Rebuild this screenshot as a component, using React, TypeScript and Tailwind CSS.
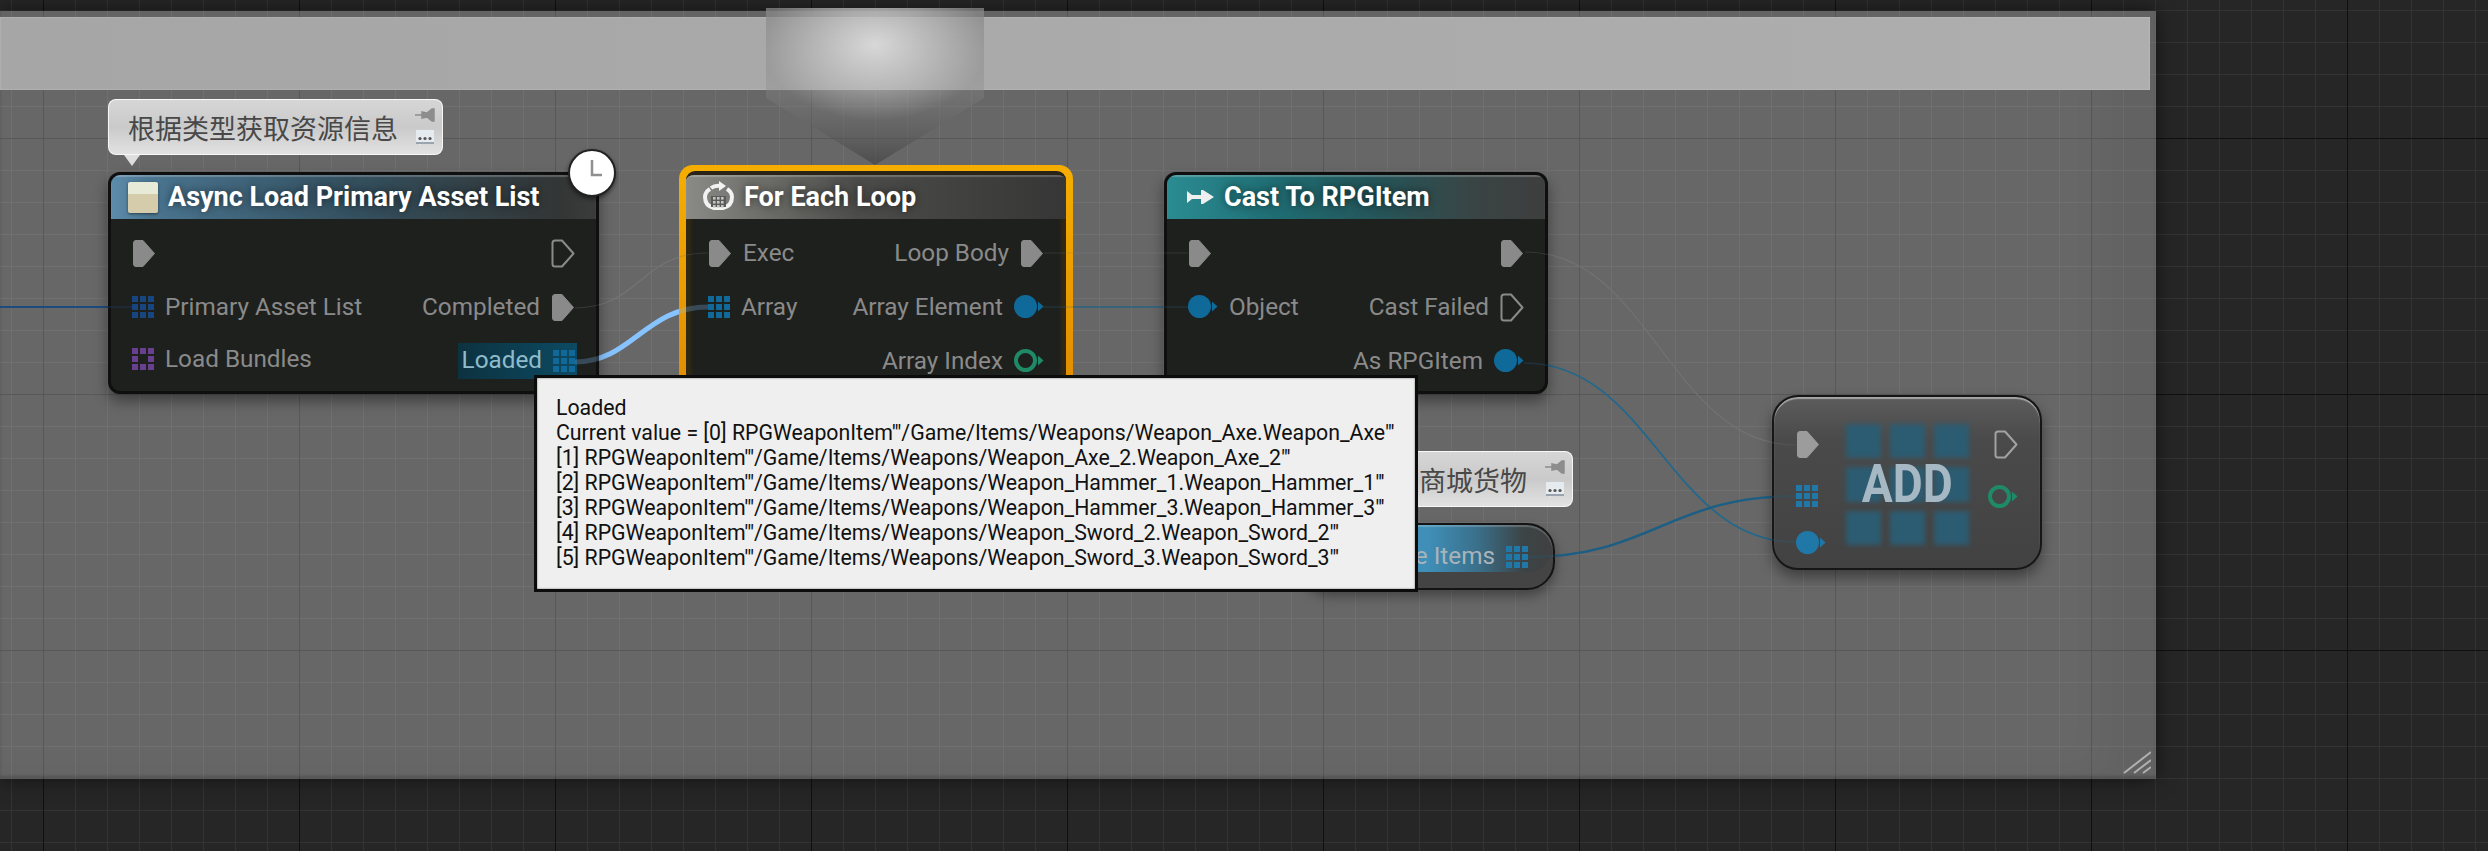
import React from "react";

const ExecPin = ({ filled = true, color = "#8a8a8a" }: { filled?: boolean; color?: string }) => (
  <svg width="24" height="29" viewBox="0 0 24 29" className="shrink-0">
    <path
      d="M1.5 4 Q1.5 1.5 4 1.5 H11 L22.5 14.5 L11 27.5 H4 Q1.5 27.5 1.5 25 Z"
      fill={filled ? color : "none"}
      stroke={color}
      strokeWidth={filled ? 1 : 2}
      strokeLinejoin="round"
    />
  </svg>
);

const ArrayPin = ({ color = "#11699a", hollow = false }: { color?: string; hollow?: boolean }) => (
  <svg width="22" height="22" viewBox="0 0 22 22" className="shrink-0">
    {[0, 8, 16].flatMap((y) =>
      [0, 8, 16].map((x) =>
        hollow && x === 8 && y === 8 ? null : <rect key={`${x}-${y}`} x={x} y={y} width="6" height="6" fill={color} />
      )
    )}
  </svg>
);

const ObjectPin = ({ color = "#0f6a9a" }: { color?: string }) => (
  <svg width="30" height="23" viewBox="0 0 30 23" className="shrink-0">
    <circle cx="11.5" cy="11.5" r="11.5" fill={color} />
    <path d="M24 6.5 L29.5 11.5 L24 16.5 Z" fill={color} />
  </svg>
);

const RingPin = () => (
  <svg width="30" height="23" viewBox="0 0 30 23" className="shrink-0">
    <circle cx="11.5" cy="11.5" r="9.5" fill="none" stroke="#1f8a68" strokeWidth="4" />
    <path d="M24 6.5 L29.5 11.5 L24 16.5 Z" fill="#1f8a68" />
  </svg>
);

const PinLabel = ({ children }: { children: React.ReactNode }) => (
  <span className="text-[24.3px] leading-none text-[#8a8a8a] font-['Roboto',sans-serif] whitespace-nowrap">{children}</span>
);

const Row = ({ children }: { children: React.ReactNode }) => (
  <div className="flex h-[54px] items-center justify-between">{children}</div>
);

const Side = ({ children, className = "" }: { children: React.ReactNode; className?: string }) => (
  <div className={`flex items-center gap-[11px] ${className}`}>{children}</div>
);

const BubbleIcons = () => (
  <div className="flex w-[22px] flex-col items-center gap-[7px]">
    <svg width="20" height="14" viewBox="0 0 20 14">
      <path d="M0 7 H7 M7 4 L12 5 L17 1 H19 V13 H17 L12 9 L7 10 Z" fill="#8d8d8d" stroke="#8d8d8d" strokeWidth="1.5" />
    </svg>
    <svg width="20" height="18" viewBox="0 0 20 18">
      <path d="M1 1 H19 V14 H7 L5 17 L4 14 H1 Z" fill="#e6ebf0" />
      <rect x="1" y="13" width="18" height="2" fill="#9aa4ae" />
      <circle cx="5" cy="9.5" r="1.6" fill="#555" />
      <circle cx="10" cy="9.5" r="1.6" fill="#555" />
      <circle cx="15" cy="9.5" r="1.6" fill="#555" />
    </svg>
  </div>
);

const Bubble = ({ text, className }: { text: string; className: string }) => (
  <div
    className={`absolute flex items-center justify-between rounded-[8px] border border-white/80 bg-gradient-to-b from-[#d6d6d6] via-[#cacaca] to-[#e2e2e2] pl-[19px] pr-[6px] ${className}`}
  >
    <span className="text-[27px] leading-none text-[#484848] font-['Noto_Sans_CJK_SC','Noto_Sans',sans-serif] whitespace-nowrap">{text}</span>
    <BubbleIcons />
  </div>
);

const Title = ({ icon, text, gradient, className = "" }: { icon: React.ReactNode; text: string; gradient: string; className?: string }) => (
  <div className={`flex h-[44px] items-center shadow-[inset_0_2px_1px_rgba(255,255,255,0.22)] ${gradient} ${className}`}>
    {icon}
    <span className="text-[27px] font-bold leading-none text-white font-['Roboto',sans-serif] whitespace-nowrap [text-shadow:0_0_9px_rgba(0,0,0,0.55)]">
      {text}
    </span>
  </div>
);

const nodeFrame =
  "absolute rounded-[12px] border-[3px] border-[#0f0f0f] bg-[#1e201e] shadow-[0_7px_14px_rgba(0,0,0,0.4)]";

const Wires = ({ dim = false }: { dim?: boolean }) => (
  <svg className={`absolute left-0 top-0 ${dim ? "opacity-25" : ""}`} width="2488" height="851" fill="none">
    <path d="M0 307 H132" stroke="#1d4b7d" strokeWidth="2" />
    <path d="M575 308 C640 308 640 253 708 253" stroke="#747474" strokeWidth="1.2" />
    <path d="M1044 253 H1188" stroke="#707070" strokeWidth="1.2" />
    <path d="M1525 252 C1650 252 1670 445 1796 445" stroke="#727272" strokeWidth="1.2" />
    <path d="M575 362 C632 362 645 307 708 307" stroke="#86c3ff" strokeWidth="5" />
    <path d="M1043 307 H1188" stroke="#2b6380" strokeWidth="1.6" />
    <path d="M1524 363 C1650 363 1670 542 1796 542" stroke="#22688c" strokeWidth="1.6" />
    <path d="M1528 557 C1650 557 1670 496 1796 496" stroke="#1d5f84" strokeWidth="2.4" />
  </svg>
);

const tooltipLines = [
  "Loaded",
  `Current value = [0] RPGWeaponItem'"/Game/Items/Weapons/Weapon_Axe.Weapon_Axe"'`,
  `[1] RPGWeaponItem'"/Game/Items/Weapons/Weapon_Axe_2.Weapon_Axe_2"'`,
  `[2] RPGWeaponItem'"/Game/Items/Weapons/Weapon_Hammer_1.Weapon_Hammer_1"'`,
  `[3] RPGWeaponItem'"/Game/Items/Weapons/Weapon_Hammer_3.Weapon_Hammer_3"'`,
  `[4] RPGWeaponItem'"/Game/Items/Weapons/Weapon_Sword_2.Weapon_Sword_2"'`,
  `[5] RPGWeaponItem'"/Game/Items/Weapons/Weapon_Sword_3.Weapon_Sword_3"'`,
];

export default function App() {
  return (
    <div className="relative h-[851px] w-[2488px] overflow-hidden bg-[#262626] [background-image:linear-gradient(90deg,#101010_1px,transparent_1px),linear-gradient(180deg,#101010_1px,transparent_1px),linear-gradient(90deg,#333333_1px,transparent_1px),linear-gradient(180deg,#333333_1px,transparent_1px)] [background-size:256px_256px,256px_256px,32px_32px,32px_32px] [background-position:43px_0,0_138px,11px_0,0_10px]">
      {/* Comment box */}
      <div className="absolute left-0 top-[11px] h-[768px] w-[2156px] bg-white/30 pr-[6px] pt-[6px] shadow-[0_0_18px_rgba(0,0,0,0.55),inset_-50px_0_40px_rgba(0,0,0,0.05),inset_0_-3px_3px_rgba(0,0,0,0.18)]">
        <div className="h-[73px] bg-gradient-to-r from-[#a6a6a6] to-[#aeaeae] shadow-[inset_0_0_2px_rgba(255,255,255,0.35)]" />
        <svg className="absolute bottom-[5px] right-[5px]" width="28" height="24" viewBox="0 0 28 24" fill="none" stroke="#b0b0b0" strokeWidth="2">
          <path d="M1 23 L28 2 M11 23 L28 10 M20 23 L28 17" />
        </svg>
      </div>

      {/* Chevron */}
      <svg className="absolute left-[766px] top-[8px]" width="218" height="158" viewBox="0 0 218 158">
        <defs>
          <radialGradient id="glow" gradientUnits="userSpaceOnUse" cx="109" cy="36" r="112" gradientTransform="translate(0 12) scale(1 0.68)">
            <stop offset="0" stopColor="#ffffff" stopOpacity="0.62" />
            <stop offset="1" stopColor="#ffffff" stopOpacity="0" />
          </radialGradient>
          <linearGradient id="fade" x1="0" y1="0" x2="0" y2="1">
            <stop offset="0" stopColor="#8a8a8a" stopOpacity="0.75" />
            <stop offset="0.5" stopColor="#8a8a8a" stopOpacity="0.35" />
            <stop offset="1" stopColor="#3c3c3c" stopOpacity="0.6" />
          </linearGradient>
        </defs>
        <path d="M0 0 H218 V90 L109 157 L0 90 Z" fill="url(#fade)" />
        <path d="M0 0 H218 V90 L109 157 L0 90 Z" fill="url(#glow)" />
      </svg>

      <Wires />

      <Bubble text="根据类型获取资源信息" className="left-[108px] top-[99px] h-[56px] w-[335px]" />
      <svg className="absolute left-[124px] top-[155px]" width="16" height="11" viewBox="0 0 16 11">
        <path d="M0 0 H16 L8 11 Z" fill="#dedede" />
      </svg>

      {/* Async Load Primary Asset List */}
      <div className={`${nodeFrame} left-[108px] top-[172px] h-[222px] w-[491px]`}>
        <div className="overflow-hidden rounded-t-[9px]">
          <Title
            text="Async Load Primary Asset List"
            gradient="bg-[linear-gradient(90deg,#5d8cab_0%,#4a7590_8%,#34505f_50%,#333636_92%,#3b3b3b_100%)]"
            icon={
              <div className="ml-[17px] mr-[10px] flex h-[31px] w-[30px] flex-col overflow-hidden rounded-[2px] shadow-[0_1px_3px_rgba(0,0,0,0.5)]">
                <div className="h-[12px] bg-[#e8ead8]" />
                <div className="flex-1 bg-[#d4ccab]" />
              </div>
            }
          />
        </div>
        <div className="px-[21px] pt-[7px]">
          <Row>
            <ExecPin />
            <ExecPin filled={false} />
          </Row>
          <Row>
            <Side>
              <ArrayPin color="#16457f" />
              <PinLabel>Primary Asset List</PinLabel>
            </Side>
            <Side>
              <PinLabel>Completed</PinLabel>
              <ExecPin />
            </Side>
          </Row>
          <Row>
            <Side className="-mt-[4px]">
              <ArrayPin color="#693f8f" hollow />
              <PinLabel>Load Bundles</PinLabel>
            </Side>
            <div className="-mr-[2px] flex h-[36px] items-center gap-[11px] bg-[linear-gradient(90deg,#0c3240,#0c4a62)] pl-[4px] pr-[2px] [&>span>span]:text-[#8fbccb]">
              <span>
                <PinLabel>Loaded</PinLabel>
              </span>
              <ArrayPin />
            </div>
          </Row>
        </div>
      </div>

      {/* Clock badge */}
      <div className="absolute left-[568px] top-[149px] flex h-[48px] w-[48px] items-center justify-center rounded-full border-[2px] border-[#222] bg-white shadow-[0_2px_4px_rgba(0,0,0,0.5)]">
        <svg width="44" height="44" viewBox="0 0 44 44" fill="none" stroke="#909090" strokeWidth="2.5">
          <path d="M22 9 V24 H32" />
        </svg>
      </div>

      {/* For Each Loop */}
      <div className="absolute left-[679px] top-[165px] h-[240px] w-[394px] rounded-[14px] bg-[linear-gradient(180deg,#f5ae00,#e08a00)] p-[7px] pt-[6px]">
        <div className="h-full overflow-hidden rounded-[9px] border-t-[4px] border-[#2a2418] bg-[#1e201e] shadow-[inset_5px_0_4px_rgba(90,60,0,0.35),inset_-5px_0_4px_rgba(90,60,0,0.35)]">
          <Title
            text="For Each Loop"
            gradient="bg-[linear-gradient(90deg,#8a8a86_0%,#767672_14%,#4c4c4a_45%,#363636_100%)]"
            icon={
              <svg className="ml-[16px] mr-[9px]" width="33" height="32" viewBox="0 0 33 32" fill="none">
                <path d="M8 8 Q3 11 3 16 Q3 25 12 27 H21 Q30 25 30 16 Q30 11 25 8 M9 7 Q13 4 19 5" stroke="#f2f2f2" strokeWidth="4" />
                <path d="M17 0 L24 5 L17 10 Z" fill="#f2f2f2" />
                <rect x="9" y="15" width="15" height="11" fill="#5a5a58" />
                <g fill="#c4c4c4">
                  {[16, 20, 24].flatMap((y) => [11, 15, 19].map((x) => <rect key={`${x}-${y}`} x={x} y={y} width="2.6" height="2.6" />))}
                </g>
              </svg>
            }
          />
          <div className="pl-[22px] pr-[22px] pt-[7px]">
            <Row>
              <Side>
                <ExecPin />
                <PinLabel>Exec</PinLabel>
              </Side>
              <Side>
                <PinLabel>Loop Body</PinLabel>
                <ExecPin />
              </Side>
            </Row>
            <Row>
              <Side>
                <ArrayPin />
                <PinLabel>Array</PinLabel>
              </Side>
              <Side>
                <PinLabel>Array Element</PinLabel>
                <ObjectPin />
              </Side>
            </Row>
            <div className="flex h-[54px] items-center justify-end">
              <Side>
                <PinLabel>Array Index</PinLabel>
                <RingPin />
              </Side>
            </div>
          </div>
        </div>
      </div>

      {/* Cast To RPGItem */}
      <div className={`${nodeFrame} left-[1164px] top-[172px] h-[222px] w-[384px]`}>
        <div className="overflow-hidden rounded-t-[9px]">
          <Title
            text="Cast To RPGItem"
            gradient="bg-[linear-gradient(90deg,#2a8c92_0%,#1f6c72_30%,#25565a_55%,#3a4444_82%,#3e3e3e_100%)]"
            icon={
              <svg className="ml-[19px] mr-[9px] blur-[0.6px]" width="29" height="20" viewBox="0 0 29 20" fill="#efefef">
                <path d="M1 4 L6 8 H15 V3 L17 3 L28 10 L17 17 L15 17 V12 H6 L1 16 Z" />
              </svg>
            }
          />
        </div>
        <div className="px-[21px] pt-[7px]">
          <Row>
            <ExecPin />
            <ExecPin />
          </Row>
          <Row>
            <Side>
              <ObjectPin />
              <PinLabel>Object</PinLabel>
            </Side>
            <Side>
              <PinLabel>Cast Failed</PinLabel>
              <ExecPin filled={false} />
            </Side>
          </Row>
          <div className="flex h-[54px] items-center justify-end">
            <Side>
              <PinLabel>As RPGItem</PinLabel>
              <ObjectPin />
            </Side>
          </div>
        </div>
      </div>

      <Bubble text="获取商城货物" className="left-[1345px] top-[451px] h-[56px] w-[228px]" />

      {/* Store Items getter */}
      <div className="absolute left-[1301px] top-[523px] flex h-[67px] w-[254px] items-center justify-end gap-[11px] overflow-hidden rounded-[28px] border-[2px] border-[#141414] bg-[linear-gradient(90deg,#3f8fb8_0%,#3f8fb8_50%,#3a6f8a_70%,#3c4446_88%,#404040_100%)] pr-[25px] shadow-[0_6px_12px_rgba(0,0,0,0.35),inset_0_-16px_0_#444444,inset_0_2px_1px_rgba(255,255,255,0.2)]">
        <span className="text-[24.3px] leading-none text-[#a9b4ba] font-['Roboto',sans-serif]">Store Items</span>
        <ArrayPin color="#1f78a8" />
      </div>

      {/* ADD node */}
      <div className="absolute left-[1772px] top-[395px] flex h-[175px] w-[270px] justify-between rounded-[26px] border-[2px] border-[#161616] bg-[linear-gradient(180deg,#5c5c5c_0%,#4a4a4a_25%,#424242_100%)] pl-[22px] pr-[22px] pt-[33px] shadow-[0_7px_14px_rgba(0,0,0,0.4),inset_0_2px_1px_rgba(255,255,255,0.45)]">
        <div className="flex flex-col items-start">
          <ExecPin color="#9c9c9c" />
          <div className="mt-[26px]">
            <ArrayPin color="#1f78a8" />
          </div>
          <div className="mt-[24px]">
            <ObjectPin color="#1f78a8" />
          </div>
        </div>
        <div className="relative -mt-[6px] ml-[1px] grid h-[121px] w-[123px] grid-cols-3 grid-rows-3 gap-[9px]">
          {Array.from({ length: 9 }).map((_, i) => (
            <div key={i} className="bg-[#2c5c72] blur-[2.5px]" />
          ))}
          <div className="absolute inset-0 flex items-center justify-center">
            <span className="scale-x-[0.87] text-[53px] font-bold leading-none text-[#a6b8c3] font-['Roboto',sans-serif]">ADD</span>
          </div>
        </div>
        <div className="flex flex-col items-end">
          <ExecPin filled={false} color="#a2a2a2" />
          <div className="mt-[26px]">
            <RingPin />
          </div>
        </div>
      </div>

      <Wires dim />

      {/* Tooltip */}
      <div className="absolute left-[534px] top-[375px] w-[884px] border-[3px] border-[#0c0c0c] bg-[#efefef] pb-[19px] pl-[19px] pt-[17px] shadow-[inset_0_0_2px_rgba(0,0,0,0.6)]">
        {tooltipLines.map((l) => (
          <div key={l} className="h-[25px] text-[21.3px] leading-[25px] text-[#111] font-['Roboto',sans-serif] whitespace-nowrap">
            {l}
          </div>
        ))}
      </div>
    </div>
  );
}
